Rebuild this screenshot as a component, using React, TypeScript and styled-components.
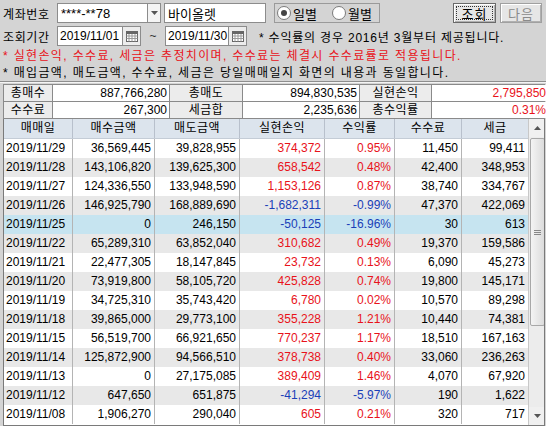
import React from 'react'
import styled, { createGlobalStyle } from 'styled-components'

const GlobalStyle = createGlobalStyle`
  html, body {
    margin: 0;
    padding: 0;
    background: #d4d4d4;
  }
  body {
    font-family: "Liberation Sans", "Noto Sans CJK KR", sans-serif;
    font-size: 12px;
    color: #000;
  }
`

const RED = '#e8121a'
const BLUE = '#1a3fb8'

type Tone = 'up' | 'down' | 'none'

const rows: [string, string, string, string, string, string, string][] = [
  ['2019/11/29', '36,569,445', '39,828,955', '374,372', '0.95%', '11,450', '99,411'],
  ['2019/11/28', '143,106,820', '139,625,300', '658,542', '0.48%', '42,400', '348,953'],
  ['2019/11/27', '124,336,550', '133,948,590', '1,153,126', '0.87%', '38,740', '334,767'],
  ['2019/11/26', '146,925,790', '168,889,690', '-1,682,311', '-0.99%', '47,370', '422,069'],
  ['2019/11/25', '0', '246,150', '-50,125', '-16.96%', '30', '613'],
  ['2019/11/22', '65,289,310', '63,852,040', '310,682', '0.49%', '19,370', '159,586'],
  ['2019/11/21', '22,477,305', '18,147,845', '23,732', '0.13%', '6,090', '45,273'],
  ['2019/11/20', '73,919,800', '58,105,720', '425,828', '0.74%', '19,800', '145,171'],
  ['2019/11/19', '34,725,310', '35,743,420', '6,780', '0.02%', '10,570', '89,298'],
  ['2019/11/18', '39,865,000', '29,773,100', '355,228', '1.21%', '10,440', '74,381'],
  ['2019/11/15', '56,519,700', '66,921,650', '770,237', '1.17%', '18,510', '167,163'],
  ['2019/11/14', '125,872,900', '94,566,510', '378,738', '0.40%', '33,060', '236,263'],
  ['2019/11/13', '0', '27,175,085', '389,409', '1.46%', '4,070', '67,920'],
  ['2019/11/12', '647,650', '651,875', '-41,294', '-5.97%', '190', '1,622'],
  ['2019/11/08', '1,906,270', '290,040', '605', '0.21%', '320', '717'],
]

const Window = styled.div`
  width: 546px;
  height: 426px;
  box-sizing: border-box;
  padding: 3px 1px 0 3px;
  display: flex;
  flex-direction: column;
  overflow: hidden;
`

const Line = styled.div<{ $h?: number }>`
  display: flex;
  align-items: center;
  height: ${(p) => p.$h ?? 20}px;
  flex-shrink: 0;
  white-space: nowrap;
`

const Label = styled.span`
  width: 54px;
  font-size: 12px;
  letter-spacing: 0.6px;
  flex-shrink: 0;
`

const Field = styled.div<{ $w: number; $date?: boolean }>`
  width: ${(p) => p.$w}px;
  height: 20px;
  box-sizing: border-box;
  background: #fff;
  border: 1px solid #8c8c8c;
  display: flex;
  align-items: center;
  padding-left: ${(p) => (p.$date ? 2 : 3)}px;
  font-size: ${(p) => (p.$date ? 12 : 13)}px;
  overflow: hidden;
  white-space: nowrap;
`

const ComboBtn = styled.div`
  width: 13px;
  height: 20px;
  box-sizing: border-box;
  border: 1px solid #8c8c8c;
  border-left: none;
  background: #f4f4f4;
  display: flex;
  align-items: center;
  justify-content: center;
`

const CalBtn = styled.div`
  width: 18px;
  height: 20px;
  box-sizing: border-box;
  border: 1px solid #8c8c8c;
  border-left: none;
  background: #ececec;
  display: flex;
  align-items: center;
  justify-content: center;
`

const RadioGroup = styled.div`
  margin-left: 8px;
  width: 106px;
  height: 20px;
  box-sizing: border-box;
  border: 1px solid #9a9a9a;
  display: flex;
  align-items: center;
  padding-left: 2px;
`

const RadioItem = styled.label`
  display: flex;
  align-items: center;
  gap: 2px;
  font-size: 13px;
  margin-right: 15px;
`

const Circle = styled.span<{ $on?: boolean }>`
  width: 12px;
  height: 12px;
  border-radius: 50%;
  border: 1px solid #7a7a7a;
  background: #fff;
  display: flex;
  align-items: center;
  justify-content: center;
  &::after {
    content: '';
    width: 6px;
    height: 6px;
    border-radius: 50%;
    background: ${(p) => (p.$on ? '#444' : 'transparent')};
  }
`

const Buttons = styled.div`
  margin-left: auto;
  display: flex;
  gap: 4px;
  margin-right: 3px;
`

const Button = styled.div<{ $primary?: boolean; $disabled?: boolean }>`
  width: ${(p) => (p.$primary ? 43 : 42)}px;
  height: 20px;
  box-sizing: border-box;
  background: #e6e6e6;
  border: 1px solid ${(p) => (p.$primary ? '#6a6a6a' : '#a0a0a0')};
  box-shadow: inset 1px 1px 0 #fff, inset -1px -1px 0 #b0b0b0;
  color: ${(p) => (p.$disabled ? '#8a8a8a' : '#000')};
  font-size: 13px;
  letter-spacing: 1px;
  display: flex;
  align-items: center;
  justify-content: center;
  position: relative;
  &::after {
    content: '';
    display: ${(p) => (p.$primary ? 'block' : 'none')};
    position: absolute;
    inset: 2px;
    border: 1px dotted #333;
  }
`

const Tilde = styled.span`
  width: 24px;
  text-align: center;
  font-size: 12px;
  color: #333;
`

const Hint = styled.span`
  margin-left: 12px;
  font-size: 12px;
  letter-spacing: 0.8px;
`

const Notice = styled(Line)<{ $red?: boolean }>`
  color: ${(p) => (p.$red ? RED : '#000')};
  font-size: 12px;
  letter-spacing: 1.35px;
`

const Divider = styled.div`
  height: 0;
  border-top: 1px solid #8e8e8e;
  border-bottom: 1px solid #f4f4f4;
  margin: 2px -1px 1px -3px;
  flex-shrink: 0;
`

const Summary = styled.div`
  display: grid;
  grid-template-columns: 48px 116px 72px 116px 71px 116px;
  grid-auto-rows: 16px;
  gap: 1px;
  background: #8a8a8a;
  border: 1px solid #8a8a8a;
  width: 542px;
  box-sizing: border-box;
  flex-shrink: 0;
`

const SumLabel = styled.div`
  background: #ececec;
  text-align: center;
  line-height: 16px;
  font-size: 12px;
  letter-spacing: 0.5px;
`

const SumValue = styled.div<{ $tone?: Tone }>`
  background: #fff;
  text-align: right;
  padding-right: 2px;
  line-height: 16px;
  font-size: 12px;
  color: ${(p) => (p.$tone === 'up' ? RED : '#000')};
`

const Table = styled.div`
  width: 542px;
  flex: 1;
  box-sizing: border-box;
  border: 1px solid #7a7a7a;
  border-top: none;
  display: flex;
  background: #fff;
  overflow: hidden;
`

const Body = styled.div`
  flex: 1;
  display: flex;
  flex-direction: column;
`

const cols = '69px 82px 85px 85px 70px 67px 66px'

const HeadRow = styled.div`
  display: grid;
  grid-template-columns: ${cols};
  height: 19px;
  background: #dce4ed;
  border-bottom: 1px solid #c4ccd6;
`

const HeadCell = styled.div`
  text-align: center;
  line-height: 19px;
  font-size: 12px;
  letter-spacing: 0.5px;
  border-right: 1px solid #b8c0cc;
  &:last-child {
    border-right: none;
  }
`

const Row = styled.div<{ $alt?: boolean; $sel?: boolean }>`
  display: grid;
  grid-template-columns: ${cols};
  height: 19px;
  background: ${(p) => (p.$sel ? '#c6e4f0' : p.$alt ? '#e8e8e8' : '#fff')};
`

const Cell = styled.div<{ $tone?: Tone; $left?: boolean }>`
  line-height: 19px;
  font-size: 12px;
  text-align: ${(p) => (p.$left ? 'left' : 'right')};
  padding: 0 3px 0 2px;
  border-right: 1px solid #b4b4b4;
  color: ${(p) => (p.$tone === 'up' ? RED : p.$tone === 'down' ? BLUE : '#000')};
  white-space: nowrap;
  &:last-child {
    border-right: none;
  }
`

const ScrollBar = styled.div`
  width: 17px;
  flex-shrink: 0;
  background: #ececec;
  border-left: 1px solid #c8c8c8;
  display: flex;
  flex-direction: column;
`

const Arrow = styled.div`
  height: 18px;
  display: flex;
  align-items: center;
  justify-content: center;
  background: #f0f0f0;
`

const Track = styled.div`
  flex: 1;
  display: flex;
  flex-direction: column;
  padding: 1px 0;
`

const Thumb = styled.div`
  height: 186px;
  margin: 0 1px;
  border: 1px solid #a8a8a8;
  border-radius: 2px;
  background: linear-gradient(to right, #f4f4f4, #dcdcdc);
  display: flex;
  align-items: center;
  justify-content: center;
`

const Calendar = () => (
  <svg width="12" height="11" viewBox="0 0 12 11">
    <rect x="0.5" y="0.5" width="11" height="10" fill="#fff" stroke="#666" />
    <rect x="0.5" y="0.5" width="11" height="2.5" fill="#666" />
    {[3, 6, 9].map((x) => (
      <line key={x} x1={x} y1="3" x2={x} y2="10.5" stroke="#999" />
    ))}
    {[5, 7.5].map((y) => (
      <line key={y} x1="0.5" y1={y} x2="11.5" y2={y} stroke="#999" />
    ))}
  </svg>
)

const Tri = ({ up }: { up?: boolean }) => (
  <svg width="7" height="4" viewBox="0 0 7 4">
    <polygon points={up ? '3.5,0 7,4 0,4' : '0,0 7,0 3.5,4'} fill="#555" />
  </svg>
)

const toneOf = (v: string): Tone => (v.startsWith('-') ? 'down' : 'up')

export default function App() {
  return (
    <>
      <GlobalStyle />
      <Window>
        <Line>
          <Label>계좌번호</Label>
          <Field $w={91}>****-**78</Field>
          <ComboBtn>
            <Tri />
          </ComboBtn>
          <Field $w={102} style={{ marginLeft: 3 }}>
            바이올렛
          </Field>
          <RadioGroup>
            <RadioItem>
              <Circle $on />
              일별
            </RadioItem>
            <RadioItem>
              <Circle />
              월별
            </RadioItem>
          </RadioGroup>
          <Buttons>
            <Button $primary>조회</Button>
            <Button $disabled>다음</Button>
          </Buttons>
        </Line>
        <Line style={{ marginTop: 3 }}>
          <Label>조회기간</Label>
          <Field $w={66} $date>
            2019/11/01
          </Field>
          <CalBtn>
            <Calendar />
          </CalBtn>
          <Tilde>~</Tilde>
          <Field $w={64} $date>
            2019/11/30
          </Field>
          <CalBtn>
            <Calendar />
          </CalBtn>
          <Hint>* 수익률의 경우 2016년 3월부터 제공됩니다.</Hint>
        </Line>
        <Notice $h={17} $red>
          * 실현손익, 수수료, 세금은 추정치이며, 수수료는 체결시 수수료률로 적용됩니다.
        </Notice>
        <Notice $h={16}>* 매입금액, 매도금액, 수수료, 세금은 당일매매일지 화면의 내용과 동일합니다.</Notice>
        <Divider />
        <Summary>
          <SumLabel>총매수</SumLabel>
          <SumValue>887,766,280</SumValue>
          <SumLabel>총매도</SumLabel>
          <SumValue>894,830,535</SumValue>
          <SumLabel>실현손익</SumLabel>
          <SumValue $tone="up">2,795,850</SumValue>
          <SumLabel>수수료</SumLabel>
          <SumValue>267,300</SumValue>
          <SumLabel>세금합</SumLabel>
          <SumValue>2,235,636</SumValue>
          <SumLabel>총수익률</SumLabel>
          <SumValue $tone="up">0.31%</SumValue>
        </Summary>
        <Table>
          <Body>
            <HeadRow>
              {['매매일', '매수금액', '매도금액', '실현손익', '수익률', '수수료', '세금'].map((h) => (
                <HeadCell key={h}>{h}</HeadCell>
              ))}
            </HeadRow>
            {rows.map((r, i) => (
              <Row key={r[0]} $alt={i % 2 === 1} $sel={r[0] === '2019/11/25'}>
                <Cell $left>{r[0]}</Cell>
                <Cell>{r[1]}</Cell>
                <Cell>{r[2]}</Cell>
                <Cell $tone={toneOf(r[3])}>{r[3]}</Cell>
                <Cell $tone={toneOf(r[4])}>{r[4]}</Cell>
                <Cell>{r[5]}</Cell>
                <Cell>{r[6]}</Cell>
              </Row>
            ))}
          </Body>
          <ScrollBar>
            <Arrow>
              <Tri up />
            </Arrow>
            <Track>
              <Thumb>
                <svg width="7" height="5" viewBox="0 0 7 5">
                  {[0.5, 2.5, 4.5].map((y) => (
                    <line key={y} x1="0" y1={y} x2="7" y2={y} stroke="#888" />
                  ))}
                </svg>
              </Thumb>
            </Track>
            <Arrow>
              <Tri />
            </Arrow>
          </ScrollBar>
        </Table>
      </Window>
    </>
  )
}
